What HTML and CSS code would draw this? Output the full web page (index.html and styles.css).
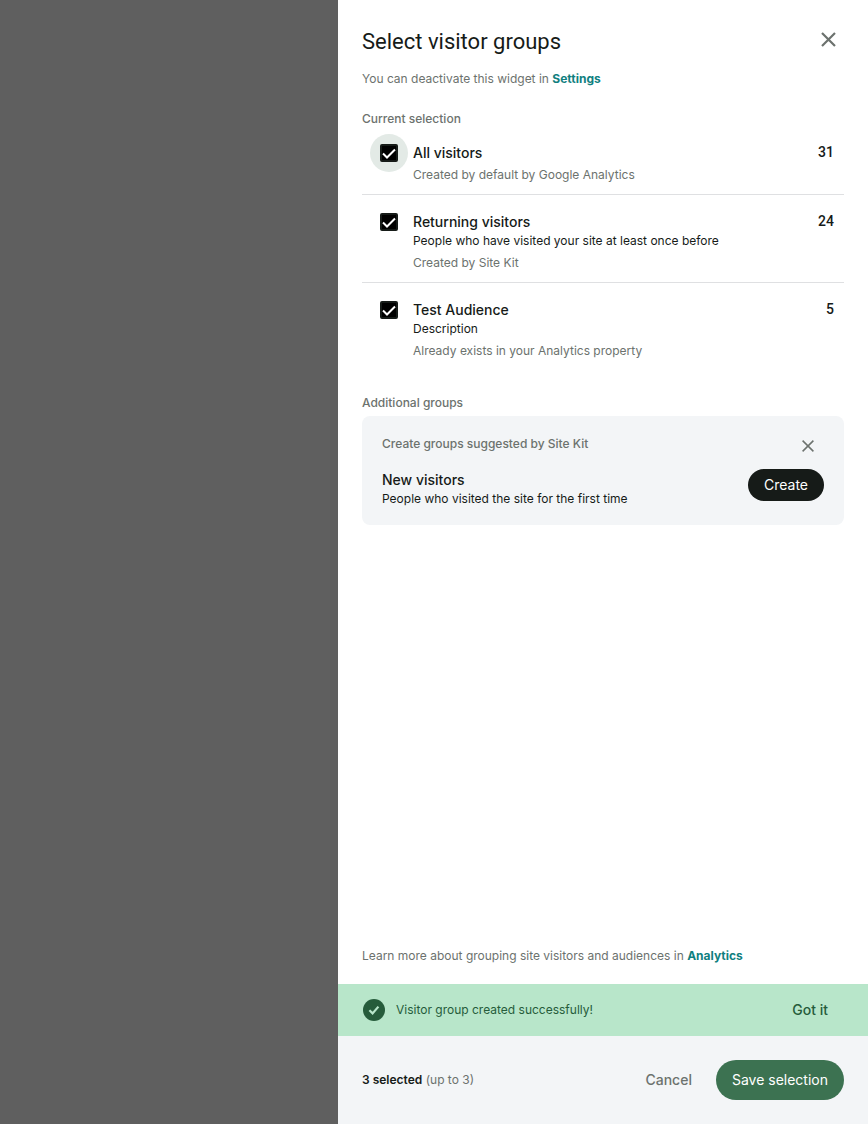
FILE: index.html
```html
<!DOCTYPE html>
<html lang="en">
<head>
<meta charset="utf-8">
<meta name="viewport" content="width=device-width, initial-scale=1">
<title>Select visitor groups</title>
<link rel="stylesheet" href="styles.css">
</head>
<body>
<div class="overlay">
  <section class="panel" role="dialog" aria-labelledby="panel-title">
    <header class="panel-header">
      <div class="panel-heading">
        <h1 class="panel-title" id="panel-title">Select visitor groups</h1>
        <button class="icon-button" type="button" aria-label="Close">
          <svg width="15" height="15" viewBox="0 0 15 15"><path d="M1 1l13 13M14 1L1 14" fill="none" stroke="currentColor" stroke-width="2.2"/></svg>
        </button>
      </div>
      <p class="note">You can deactivate this widget in <a class="link" href="#settings">Settings</a></p>
    </header>

    <main class="panel-content">
      <h2 class="section-title">Current selection</h2>
      <ul class="audiences">
        <li class="audience">
          <span class="check check-focused">
            <input class="check-input" type="checkbox" id="all" checked>
            <svg class="check-mark" width="18" height="18" viewBox="0 0 18 18"><path d="M3 9.5l4 4 8-8" fill="none" stroke="currentColor" stroke-width="2"/></svg>
          </span>
          <div class="audience-body">
            <label class="name" for="all">All visitors</label>
            <p class="meta">Created by default by Google Analytics</p>
          </div>
          <span class="count">31</span>
        </li>
        <li class="audience">
          <span class="check">
            <input class="check-input" type="checkbox" id="returning" checked>
            <svg class="check-mark" width="18" height="18" viewBox="0 0 18 18"><path d="M3 9.5l4 4 8-8" fill="none" stroke="currentColor" stroke-width="2"/></svg>
          </span>
          <div class="audience-body">
            <label class="name" for="returning">Returning visitors</label>
            <p class="description">People who have visited your site at least once before</p>
            <p class="meta">Created by Site Kit</p>
          </div>
          <span class="count">24</span>
        </li>
        <li class="audience">
          <span class="check">
            <input class="check-input" type="checkbox" id="test" checked>
            <svg class="check-mark" width="18" height="18" viewBox="0 0 18 18"><path d="M3 9.5l4 4 8-8" fill="none" stroke="currentColor" stroke-width="2"/></svg>
          </span>
          <div class="audience-body">
            <label class="name" for="test">Test Audience</label>
            <p class="description">Description</p>
            <p class="meta">Already exists in your Analytics property</p>
          </div>
          <span class="count">5</span>
        </li>
      </ul>

      <h2 class="section-title">Additional groups</h2>
      <div class="card">
        <div class="card-header">
          <h3 class="section-title">Create groups suggested by Site Kit</h3>
          <button class="icon-button icon-button-small" type="button" aria-label="Dismiss suggestions">
            <svg width="12" height="12" viewBox="0 0 12 12"><path d="M.6.6l10.8 10.8M11.4.6L.6 11.4" fill="none" stroke="currentColor" stroke-width="1.5"/></svg>
          </button>
        </div>
        <div class="card-row">
          <div class="audience-body">
            <h4 class="name">New visitors</h4>
            <p class="description">People who visited the site for the first time</p>
          </div>
          <button class="button button-dark" type="button">Create</button>
        </div>
      </div>
    </main>

    <p class="note learn-more">Learn more about grouping site visitors and audiences in <a class="link" href="#analytics">Analytics</a></p>

    <div class="notice" role="status">
      <svg class="notice-icon" width="22" height="22" viewBox="0 0 22 22"><circle cx="11" cy="11" r="11" fill="currentColor"/><path d="M6.4 11.2l3.2 3.2 5.8-6.8" fill="none" stroke="#b8e6ca" stroke-width="2.2"/></svg>
      <p class="notice-text">Visitor group created successfully!</p>
      <button class="button button-notice" type="button">Got it</button>
    </div>

    <footer class="panel-footer">
      <p class="selected"><strong class="selected-count">3 selected</strong> (up to 3)</p>
      <button class="button button-text" type="button">Cancel</button>
      <button class="button button-primary" type="button">Save selection</button>
    </footer>
  </section>
</div>
</body>
</html>
```
FILE: styles.css
```css
* {
  box-sizing: border-box;
}

body,
h1,
h2,
h3,
h4,
p,
ul {
  margin: 0;
  padding: 0;
}

body {
  background: #5f5f5f;
  color: #161b18;
  font: 400 12px/16px Inter, "Liberation Sans", sans-serif;
}

.overlay {
  display: flex;
  justify-content: flex-end;
  min-height: 100vh;
}

.panel {
  display: flex;
  flex-direction: column;
  width: 100%;
  max-width: 530px;
  background: #fff;
}

.panel-header {
  padding: 24px 24px 0;
}

.panel-heading {
  display: flex;
  justify-content: space-between;
  align-items: flex-start;
  margin-bottom: 11px;
}

.panel-title {
  font: 400 22px/36px Roboto, "Liberation Sans", sans-serif;
}

.icon-button {
  display: grid;
  place-items: center;
  width: 31px;
  height: 31px;
  padding: 0;
  border: 0;
  background: none;
  color: #6c726e;
}

.icon-button-small {
  width: 32px;
  height: 20px;
}

.note,
.meta,
.selected {
  color: #6c726e;
}

.link {
  color: #108080;
  font-weight: 700;
  text-decoration: none;
}

.panel-content {
  flex: 1;
  padding: 24px 24px 0;
}

.section-title {
  color: #6c726e;
  font-size: 12px;
  font-weight: 500;
  line-height: 16px;
}

.audiences {
  margin-bottom: 25px;
  list-style: none;
}

.audience {
  display: flex;
  padding: 17px 10px 11px 8px;
  border-bottom: 1px solid #dfe0e2;
}

.audience:first-child {
  padding-top: 16px;
}

.audience:last-child {
  border-bottom: 0;
}

.check {
  display: grid;
  place-items: center;
  width: 38px;
  height: 38px;
  margin: -9px 5px -9px 0;
  border-radius: 50%;
}

.check-focused {
  background: #e3eae6;
}

.check-input,
.check-mark {
  grid-area: 1 / 1;
}

.check-input {
  width: 18px;
  height: 18px;
  margin: 0;
  border: 2px solid #161b18;
  border-radius: 2px;
  background: #000;
  appearance: none;
}

.check-mark {
  color: #fff;
  pointer-events: none;
}

.audience-body {
  flex: 1;
}

.name {
  display: block;
  font-size: 14px;
  font-weight: 500;
  line-height: 20px;
}

.description {
  margin-top: 1px;
}

.meta {
  margin-top: 6px;
}

.name + .meta {
  margin-top: 4px;
}

.count {
  font: 500 14px/18px Roboto, "Liberation Sans", sans-serif;
}

.card {
  margin-top: 5px;
  padding: 20px 20px 18px;
  border-radius: 8px;
  background: #f3f5f7;
}

.card-header {
  display: flex;
  justify-content: space-between;
  margin-bottom: 13px;
}

.card-row {
  display: flex;
  align-items: flex-start;
}

.card-row .name {
  margin-top: 1px;
}

.button {
  padding: 0 16px;
  border: 0;
  border-radius: 20px;
  background: none;
  color: #6c726e;
  font: 400 14px/20px Inter, "Liberation Sans", sans-serif;
  white-space: nowrap;
}

.button-dark {
  height: 32px;
  background: #161b18;
  color: #fff;
}

.button-text {
  font-weight: 500;
}

.learn-more {
  padding: 0 24px 20px;
}

.notice {
  display: flex;
  align-items: center;
  gap: 11px;
  min-height: 52px;
  padding: 0 24px 0 25px;
  background: #b8e6ca;
  color: #265c3b;
}

.notice-text {
  flex: 1;
}

.button-notice {
  color: #265c3b;
  font-weight: 500;
}

.panel-footer {
  display: flex;
  align-items: center;
  gap: 8px;
  padding: 24px;
  background: #f3f5f7;
}

.selected {
  flex: 1;
}

.selected-count {
  color: #161b18;
  font-weight: 600;
}

.button-primary {
  height: 40px;
  background: #3c7251;
  color: #fff;
}
```
